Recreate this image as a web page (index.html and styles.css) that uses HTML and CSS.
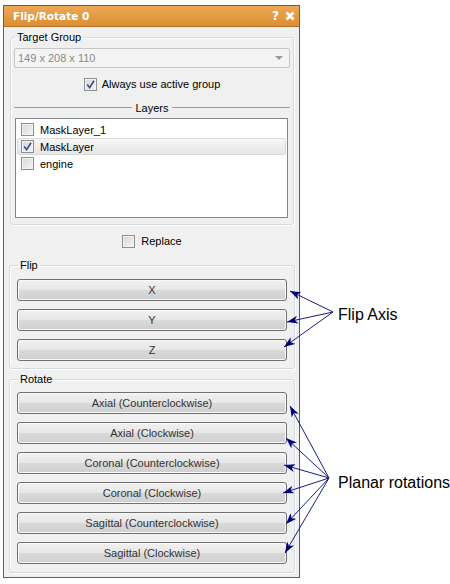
FILE: index.html
```html
<!DOCTYPE html>
<html lang="en">
<head>
  <meta charset="UTF-8">
  <title>Flip/Rotate 0</title>
  <link rel="stylesheet" href="styles.css">
</head>
<body>
  <div class="page">
    <div class="window">
      <div class="titlebar">
        <span class="title">Flip/Rotate 0</span>
        <span class="tools">
          <span class="help">?</span>
          <svg class="close" width="10" height="10" viewBox="0 0 10 10"><path d="M1.5 1.5 L8.5 8.5 M8.5 1.5 L1.5 8.5" stroke="#fff" stroke-width="2.6"/></svg>
        </span>
      </div>
      <div class="content">
        <fieldset class="group target">
          <legend>Target Group</legend>
          <div class="combo"><span>149 x 208 x 110</span><span class="drop"></span></div>
          <div class="check"><span class="box"><svg width="11" height="11" viewBox="0 0 11 11"><path d="M2.2 5.6 L4.6 8.6 L9 1.8" fill="none" stroke="#3a4a8e" stroke-width="1.6"/></svg></span>Always use active group</div>
          <div class="sep"><span>Layers</span></div>
          <div class="list">
            <div class="item"><span class="box"></span>MaskLayer_1</div>
            <div class="item sel"><span class="box"><svg width="11" height="11" viewBox="0 0 11 11"><path d="M2.2 5.6 L4.6 8.6 L9 1.8" fill="none" stroke="#3a4a8e" stroke-width="1.6"/></svg></span>MaskLayer</div>
            <div class="item"><span class="box"></span>engine</div>
          </div>
        </fieldset>

        <div class="check replace"><span class="box"></span>Replace</div>

        <fieldset class="group actions flip">
          <legend>Flip</legend>
          <button>X</button>
          <button>Y</button>
          <button>Z</button>
        </fieldset>

        <fieldset class="group actions rotate">
          <legend>Rotate</legend>
          <button>Axial (Counterclockwise)</button>
          <button>Axial (Clockwise)</button>
          <button>Coronal (Counterclockwise)</button>
          <button>Coronal (Clockwise)</button>
          <button>Sagittal (Counterclockwise)</button>
          <button>Sagittal (Clockwise)</button>
        </fieldset>
      </div>
    </div>

    <!-- callouts drawn over the screenshot -->
    <svg class="notes" width="450" height="584" viewBox="0 0 450 584">
      <defs>
        <marker id="head" viewBox="0 0 11 8" refX="11" refY="4" markerWidth="11" markerHeight="8" markerUnits="userSpaceOnUse" orient="auto">
          <path d="M0 0 L11 4 L0 8 L3 4 Z" fill="#00007a"/>
        </marker>
      </defs>
      <g stroke="#1a1a8a" stroke-width="1" marker-end="url(#head)">
        <line x1="333" y1="312" x2="290" y2="291"/>
        <line x1="333" y1="312" x2="287" y2="322"/>
        <line x1="333" y1="312" x2="284" y2="347"/>
        <line x1="329" y1="478" x2="290" y2="406"/>
        <line x1="329" y1="478" x2="286" y2="438"/>
        <line x1="329" y1="478" x2="284" y2="465"/>
        <line x1="329" y1="478" x2="283" y2="493"/>
        <line x1="329" y1="478" x2="286" y2="524"/>
        <line x1="329" y1="478" x2="285" y2="553"/>
      </g>
    </svg>
    <div class="note flip-note">Flip Axis</div>
    <div class="note planar-note">Planar rotations</div>
  </div>
</body>
</html>
```

FILE: styles.css
```css
body {
  margin: 0;
  background-color: #fff;
  font-family: "Liberation Sans", Arial, sans-serif;
  font-size: 11px;
  color: #000;
}
.page {
  position: relative;
  width: 450px;
  height: 584px;
  padding: 5px 0 0 3px;
  box-sizing: border-box;
}
.window {
  width: 297px;
  border: 1px solid #5e5e5e;
  background-color: #f0f0f0;
  box-sizing: border-box;
}
.titlebar {
  height: 20px;
  border-bottom: 1px solid #b67127;
  background: linear-gradient(#eca957, #dc8d33);
  display: flex;
  align-items: center;
  justify-content: space-between;
  padding: 0 4px 0 9px;
  color: #fff;
}
.title {
  font-family: "DejaVu Sans", sans-serif;
  font-weight: bold;
  font-size: 10.5px;
}
.tools {
  display: flex;
  align-items: center;
  gap: 6px;
}
.help {
  font-family: "DejaVu Sans", sans-serif;
  font-weight: bold;
  font-size: 12px;
}
.content {
  padding: 4px 5px 4px 6px;
}
.group {
  margin: 0;
  padding: 4px 3px 6px;
  border: 1px solid #d3dbe0;
  border-radius: 3px;
  box-shadow: inset 1px 1px #fff, 1px 1px #fff;
  min-width: 0;
}
.group legend {
  padding: 0 2px;
  margin-left: 1px;
  line-height: 13px;
}
.combo {
  height: 20px;
  box-sizing: border-box;
  border: 1px solid #c6c6c6;
  border-radius: 2px;
  background-color: #f4f4f4;
  color: #8a8a8a;
  display: flex;
  align-items: center;
  justify-content: space-between;
  padding: 0 6px 0 3px;
}
.drop {
  width: 0;
  height: 0;
  border-left: 4px solid transparent;
  border-right: 4px solid transparent;
  border-top: 4px solid #9a9a9a;
}
.check {
  height: 16px;
  display: flex;
  align-items: center;
  justify-content: center;
  gap: 5px;
  margin-top: 8px;
}
.box {
  width: 13px;
  height: 13px;
  box-sizing: border-box;
  border: 1px solid #8e8f8f;
  background: linear-gradient(135deg, #d6d6d6, #f6f6f6);
  box-shadow: inset 0 0 0 1px #f2f2f2;
  display: flex;
  align-items: center;
  justify-content: center;
  flex: none;
}
.sep {
  margin-top: 9px;
  height: 13px;
  display: flex;
  align-items: center;
  gap: 3px;
}
.sep::before,
.sep::after {
  content: "";
  flex: 1;
  border-top: 1px solid #a0a0a0;
}
.list {
  margin: 4px 2px 0 1px;
  height: 100px;
  box-sizing: border-box;
  border: 1px solid #828790;
  background-color: #fff;
  padding-top: 2px;
}
.item {
  height: 17px;
  box-sizing: border-box;
  margin: 0 1px;
  padding-left: 3px;
  border: 1px solid transparent;
  border-radius: 2px;
  display: flex;
  align-items: center;
  gap: 6px;
}
.item.sel {
  border-color: #dadada;
  background: linear-gradient(#f7f7f7, #e6e6e6);
}
.replace {
  gap: 6px;
}
.flip {
  margin: 10px -1px 0;
}
.rotate {
  margin: 4px -1px 0;
  padding-bottom: 8px;
}
.actions {
  display: flex;
  flex-direction: column;
  gap: 8px;
  padding: 7px 7px 7px;
}
.rotate.actions {
  padding-top: 6px;
  padding-bottom: 8px;
}
.actions button {
  display: block;
  width: 100%;
  height: 22px;
  margin: 0;
  border: 1px solid #707070;
  border-radius: 3px;
  background: linear-gradient(#f1f1f1, #e6e6e6 50%, #d9d9d9 51%, #d0d0d0);
  box-shadow: inset 0 0 0 1px #f8f8f8;
  font-family: "Liberation Sans", Arial, sans-serif;
  font-size: 11px;
  color: #333;
  padding: 0;
}
.notes {
  position: absolute;
  top: 0;
  left: 0;
  pointer-events: none;
}
.note {
  position: absolute;
  left: 338px;
  font-family: "Liberation Sans", Arial, sans-serif;
  font-size: 16px;
  line-height: 18px;
  color: #000;
  white-space: nowrap;
}
.flip-note {
  top: 306px;
}
.planar-note {
  top: 474px;
}
```
